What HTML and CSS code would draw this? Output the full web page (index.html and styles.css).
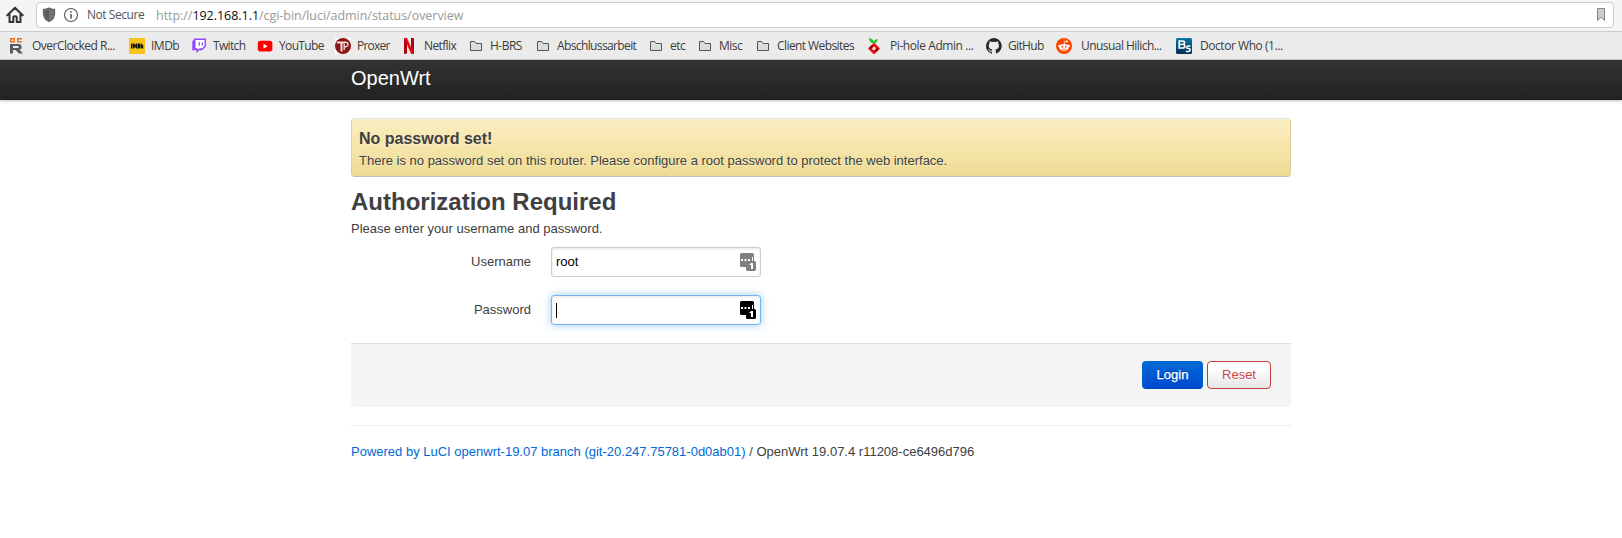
FILE: index.html
```html
<!DOCTYPE html>
<html lang="en">
<head>
<meta charset="utf-8">
<title>OpenWrt - LuCI</title>
<link rel="stylesheet" href="styles.css">
</head>
<body>
<svg class="defs" width="0" height="0">
  <symbol id="folder" viewBox="0 0 16 16"><path d="M2.5 12.5v-9h4l1.6 2h5.4v7z" fill="#dcdcdc" stroke="#555" stroke-linejoin="round"/></symbol>
  <symbol id="key" viewBox="0 0 16 18"><path d="M1.5 0h11a1.500 1.500 0 0 1 1.500 1.500V8h.5A1.500 1.500 0 0 1 16 9.500v7a1.500 1.500 0 0 1-1.500 1.500h-7A1.500 1.500 0 0 1 6 16.500V14H1.500A1.500 1.500 0 0 1 0 12.500v-11A1.500 1.500 0 0 1 1.500 0z"/><path d="M1 6h2v2H1zM4.500 6h2v2h-2zM8 6h2v2H8zM12 4h1v4h-1zM11 10h2v6h-2zM9.500 11.300l2-1.300v2h-2z" fill="#fff"/></symbol>
</svg>
<div class="toolbar">
  <svg class="home" viewBox="0 0 18 18"><path d="M1.300 9.200 9 1.700l7.700 7.500M3.500 8v8h3.800v-4.500q0-1.300 1.700-1.300t1.700 1.300V16h3.800V8" fill="none" stroke="#333" stroke-width="2" stroke-linecap="round" stroke-linejoin="round"/></svg>
  <div class="urlbar">
    <svg class="shield" viewBox="0 0 14 16"><path d="M7 1q2.500 1.500 5.500 1.700v3.800q0 5.500-5.500 8-5.500-2.500-5.500-8V2.700Q4.500 2.500 7 1z" fill="#5b5b5b" stroke="#5b5b5b" stroke-width="1.200"/><path d="M7 2.500v10.700q4.200-2 4.200-6.700V3.700Q9 3.500 7 2.500z" fill="#747474"/><path d="M7 2.200q2.400 1.300 4.600 1.500v2.800q0 4.500-4.600 6.900-4.600-2.400-4.600-6.900V3.700Q4.800 3.500 7 2.200z" fill="none" stroke="#8b8b8b" stroke-width=".5"/></svg>
    <svg class="info" viewBox="0 0 16 16"><circle cx="8" cy="8" r="6.500" fill="none" stroke="#555" stroke-width="1.100"/><path d="M8 7v4.500M8 4.200v1.600" stroke="#555" stroke-width="1.600"/></svg>
    <span class="insecure">Not Secure</span>
    <span class="url">http://<b>192.168.1.1</b>/cgi-bin/luci/admin/status/overview</span>
    <svg class="mark" viewBox="0 0 9 14"><path d="M.5.5h7v12L4 9.200.5 12.500z" fill="#ccc" stroke="#858585"/></svg>
  </div>
</div>
<nav class="bookmarks">
  <a><svg viewBox="0 0 16 16"><path d="M1.700.800h3.600v2.900H1.700zM13 .800H8.700v2.900H13" fill="none" stroke="#e8741e" stroke-width="1.400"/><path d="M1 15.500V6h9.500l2 1.500v3l-2 1.200 3.500 3.800h-4L6.500 12H4v3.500zM4 8v2h5.500V8z" fill="#565a62" fill-rule="evenodd"/></svg><span class="t1">OverClocked R...</span></a>
  <a><svg viewBox="0 0 16 16"><rect width="16" height="16" fill="#f5c518"/><path d="M2 5.500h1.500v5H2zM4 5.500h1.500l.7 2 .7-2h1.300v5H7V8l-.6 2h-.5L5.200 8v2.500H4zM8.700 5.500h1.800q.9 0 .9 1v3q0 1-.9 1H8.700zM11.900 5.500h1v1.300h1.300v3.700h-2.300z" fill="#111"/></svg><span class="t2">IMDb</span></a>
  <a><svg viewBox="0 0 16 16"><path d="M3.600.500H15v8L11 12.300H8.500L5.500 15v-2.700H1.300V3.400z" fill="#9146ff"/><path d="M4.500 2h9v6l-2.200 2.200H8.600l-1.800 1.700v-1.700H4.500z" fill="#fff"/><path d="M8.300 4.200v3.500M11.300 4.200v3.500" stroke="#9146ff" stroke-width="1.200"/></svg><span class="t3">Twitch</span></a>
  <a><svg viewBox="0 0 16 16"><rect x=".800" y="2.800" width="14.600" height="10.800" rx="2.800" fill="#f00"/><path d="m6.500 5.800 4.200 2.400-4.200 2.400z" fill="#fff"/></svg><span class="t4">YouTube</span></a>
  <a><svg viewBox="0 0 16 16"><rect width="16" height="16" fill="#fff"/><circle cx="8" cy="8" r="8" fill="#8b1616"/><path d="M2 3.500h8.500v2H7.500V14l-2-1V5.500H2z" fill="#f6dede"/><path d="M9 4.500q4.500-.8 4 2.200-.5 2.500-4 2.500M9.200 6v6" fill="none" stroke="#f6dede" stroke-width="1.300"/></svg><span class="t5">Proxer</span></a>
  <a><svg viewBox="0 0 16 16"><path d="M2 0h3v15.500l-3 .5zM9 0h3v16l-3-.5z" fill="#b1060f"/><path d="M2 0h3l7 16-3-.5z" fill="#e50914"/></svg><span class="t6">Netflix</span></a>
  <a><svg><use href="#folder"/></svg><span class="t7">H-BRS</span></a>
  <a><svg><use href="#folder"/></svg><span class="t8">Abschlussarbeit</span></a>
  <a><svg><use href="#folder"/></svg><span class="t9">etc</span></a>
  <a><svg><use href="#folder"/></svg><span class="t10">Misc</span></a>
  <a><svg><use href="#folder"/></svg><span class="t11">Client Websites</span></a>
  <a><svg viewBox="0 0 16 16"><path d="M8 5.500Q3.500 5 2.800.300 6.500.300 7.700 3.500 9 1 11.500 1.200 11.500 4.500 8 5.500z" fill="#1fc62c"/><path d="m8 6 4.700 4.500L8 15l-4.700-4.500z" fill="#f01010" stroke="#f01010" stroke-width="2" stroke-linejoin="round"/><path d="M2.500 10.500 6 7l2 1.500-2 2zM13.500 10.500 10 14l-2-1.500 2-2z" fill="#960000"/><circle cx="8" cy="10.500" r="1.700" fill="#ebebeb"/></svg><span class="t12">Pi-hole Admin ...</span></a>
  <a><svg viewBox="0 0 16 16"><path d="M8 0a8 8 0 0 0-2.530 15.590c.4.070.550-.170.550-.380v-1.490c-2 .370-2.690-.500-2.870-1-.090-.230-.480-.940-.820-1.130-.280-.150-.680-.520-.010-.530.630-.010 1.080.580 1.230.820.720 1.210 1.870.870 2.330.660.070-.520.280-.870.510-1.070-1.780-.200-3.640-.890-3.640-3.950 0-.870.310-1.590.820-2.150-.080-.200-.360-1.020.080-2.120 0 0 .670-.210 2.200.820a7.500 7.500 0 0 1 4 0c1.530-1.040 2.200-.820 2.200-.820.440 1.100.160 1.920.080 2.120.510.560.820 1.270.820 2.150 0 3.070-1.870 3.750-3.650 3.950.290.250.540.730.540 1.480v2.200c0 .210.150.460.550.380A8 8 0 0 0 8 0z" fill="#24292e"/></svg><span class="t13">GitHub</span></a>
  <a><svg viewBox="0 0 16 16"><circle cx="8" cy="8" r="8" fill="#ff4500"/><ellipse cx="8" cy="9.300" rx="4.600" ry="3.400" fill="#fff"/><circle cx="3.400" cy="8" r="1.200" fill="#fff"/><circle cx="12.600" cy="8" r="1.200" fill="#fff"/><circle cx="11" cy="3.600" r="1" fill="#fff"/><path d="M8 6.500 8.800 3l2 .500" fill="none" stroke="#fff" stroke-width=".700"/><path d="M5.900 10.900q2.100 1.300 4.200 0" fill="none" stroke="#ff4500" stroke-width=".700"/><circle cx="6.200" cy="8.700" r=".900" fill="#ff4500"/><circle cx="9.800" cy="8.700" r=".900" fill="#ff4500"/></svg><span class="t14">Unusual Hilich...</span></a>
  <a><svg viewBox="0 0 16 16"><defs><linearGradient id="bs" x2="0" y2="1"><stop stop-color="#0878a8"/><stop offset="1" stop-color="#062b55"/></linearGradient></defs><rect width="16" height="16" rx="1.500" fill="url(#bs)"/><path d="M3.200 3h3.300q2 0 2 1.600T7.300 6.300q1.500.200 1.500 1.900T6.500 10H3.200z" fill="none" stroke="#fff" stroke-width="1.700"/><path d="M14.400 8h-2.300q-1.400 0-1.400 1.300t1.400 1.300h.6q1.500 0 1.500 1.400t-1.500 1.400H9.800" fill="none" stroke="#fff" stroke-width="1.500"/><path d="M3 6.400h4.500" stroke="#fff" stroke-width="1.400"/></svg><span class="t15">Doctor Who (1...</span></a>
</nav>
<header class="header"><a class="brand">OpenWrt</a></header>
<main class="container">
  <section class="alert">
    <h4>No password set!</h4>
    <p>There is no password set on this router. Please configure a root password to protect the web interface.</p>
  </section>
  <h2>Authorization Required</h2>
  <p class="hint">Please enter your username and password.</p>
  <form>
    <div class="row">
      <label>Username</label>
      <div class="field"><span>root</span><svg class="key"><use href="#key"/></svg></div>
    </div>
    <div class="row">
      <label>Password</label>
      <div class="field focused"><span class="caret"></span><svg class="key"><use href="#key"/></svg></div>
    </div>
    <div class="actions">
      <button type="button" class="btn login">Login</button>
      <button type="button" class="btn reset">Reset</button>
    </div>
  </form>
  <footer><a>Powered by LuCI openwrt-19.07 branch (git-20.247.75781-0d0ab01)</a> / OpenWrt 19.07.4 r11208-ce6496d796</footer>
</main>
</body>
</html>
```
FILE: styles.css
```css
* { box-sizing: border-box; }
body { margin: 0; background: #fff; color: #404040; font: 13px/18px "Liberation Sans", Arial, sans-serif; overflow: hidden; }
h2, h4, p { margin: 0; }
.defs { position: absolute; }

.toolbar { display: flex; height: 31px; padding: 2px 8px 3px 6px; background: #f5f5f5; font-family: "Open Sans", "Noto Sans", sans-serif; }
.home { width: 18px; height: 18px; margin: 4px 12px 0 0; }
.urlbar { display: flex; flex: 1; align-items: center; height: 26px; padding: 0 7px 0 5px; border: 1px solid #ccc; border-radius: 4px; background: #fff; white-space: nowrap; }
.shield { width: 14px; height: 16px; }
.info { width: 16px; height: 16px; margin-left: 7px; }
.insecure { width: 69px; margin-left: 8px; font-size: 12px; letter-spacing: -.45px; color: #555; }
.url { flex: 1; margin-top: 2px; font-size: 12.500px; letter-spacing: -.04px; color: #999; }
.url b { font-weight: 400; color: #0c0c0d; }
.mark { width: 9px; height: 14px; }

.bookmarks { display: grid; grid-template-columns: 120px 62px 66px 78px 67px 66px 67px 113px 49px 58px 111px 120px 70px 120px 120px; height: 29px; padding-left: 9px; border-top: 1px solid #ccc; border-bottom: 1px solid #ccc; background: #ebebeb; color: #3b3b3b; font: 12px/28px "Open Sans", "Noto Sans", sans-serif; letter-spacing: -.5px; }
.bookmarks a { display: flex; align-items: center; gap: 6px; white-space: nowrap; }
.bookmarks svg { flex: none; width: 16px; height: 16px; }
.t1 { margin-left: 1px; }
.t3, .t4, .t13 { letter-spacing: -.65px; }
.t5 { letter-spacing: -.75px; }
.t6, .t8 { letter-spacing: -.62px; }
.t11 { letter-spacing: -.58px; }
.t12 { margin-left: 2px; letter-spacing: -.42px; }
.t14 { margin-left: 3px; letter-spacing: -.55px; }
.t15 { margin-left: 2px; letter-spacing: -.45px; }

.header { height: 40px; padding-left: 351px; background: linear-gradient(#333, #222); box-shadow: 0 1px 3px rgba(0, 0, 0, .25), inset 0 -1px 0 rgba(0, 0, 0, .1); }
.brand { display: block; padding-top: 8px; color: #fff; font-size: 20px; line-height: 20px; }
.container { width: 940px; margin: 18px 0 0 351px; }
.alert { height: 59px; padding: 7px; border: 1px solid; border-color: #e4e4e4 #ddcf99 #bfbfbf; border-radius: 4px; background: linear-gradient(#fceec1, #eedc94) padding-box; box-shadow: inset 0 1px 0 rgba(255, 255, 255, .25); text-shadow: 0 1px 0 rgba(255, 255, 255, .5); }
h4 { font-size: 16px; line-height: 25px; }
.alert p { padding-top: 1px; }
h2 { margin-top: 7px; font-size: 24px; line-height: 36px; }
.row { display: flex; margin-bottom: 18px; }
.hint { margin-bottom: 9px; }
.row label { width: 180px; margin-right: 20px; padding-top: 6px; text-align: right; }
.field { display: flex; align-items: center; width: 210px; height: 30px; padding: 0 4px; border: 1px solid #ccc; border-radius: 3px; box-shadow: inset 0 1px 3px rgba(0, 0, 0, .1); color: #000; }
.key { width: 16px; height: 18px; margin-left: auto; fill: #808080; }
.focused { border-color: #74b5ee; box-shadow: inset 0 1px 3px rgba(0, 0, 0, .1), 0 0 8px rgba(82, 168, 236, .6); }
.focused .key { fill: #000; }
.caret { width: 1px; height: 15px; background: #000; }
.actions { display: flex; justify-content: flex-end; gap: 4px; height: 64px; padding: 17px 20px; border-top: 1px solid #ddd; border-radius: 0 0 3px 3px; background: #f4f4f4; }
.btn { height: 28px; padding: 0 0 1px; border-radius: 4px; font: 13px/18px "Liberation Sans", Arial, sans-serif; }
.login { width: 61px; border: 1px solid #0064cd; border-color: #0064cd #0064cd #0048b8; background: linear-gradient(#0069d6, #0049d0); color: #fff; text-shadow: 0 -1px 0 rgba(0, 0, 0, .25); -webkit-text-stroke: .25px #fff; }
.reset { width: 64px; border: 1px solid #c43c35; background: linear-gradient(#fff 25%, #e6e6e6); color: #c9474a; text-shadow: 0 1px 1px rgba(255, 255, 255, .75); }
footer { margin-top: 18px; padding-top: 17px; border-top: 1px solid #eee; }
footer a { color: #0069d6; }
```
